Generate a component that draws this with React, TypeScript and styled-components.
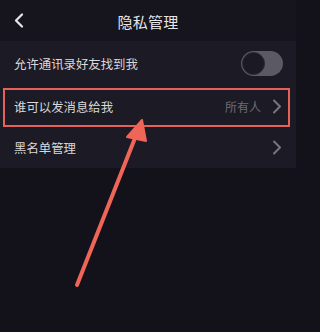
import React from "react";
import styled, { createGlobalStyle } from "styled-components";

const Global = createGlobalStyle`
  html, body { margin: 0; padding: 0; background: #13121a; }
  body { width: 296px; height: 332px; overflow: hidden; font-family: "Noto Sans CJK SC", "Noto Sans", sans-serif; }
`;

const Page = styled.div`
  position: relative;
  width: 296px;
  height: 332px;
  background: #13121a;
  display: flex;
  flex-direction: column;
`;

const Header = styled.div`
  height: 41px;
  background: #16151d;
  display: grid;
  grid-template-columns: 40px 1fr 40px;
  align-items: center;
`;

const BackBtn = styled.div`
  display: flex;
  align-items: center;
  justify-content: center;
  padding-right: 2px;
`;

const Title = styled.div`
  text-align: center;
  color: #e6e6ea;
  font-size: 15px;
  letter-spacing: 0.3px;
  padding-top: 2px;
`;

const List = styled.div`
  background: #1c1b25;
  display: flex;
  flex-direction: column;
`;

const Row = styled.div<{ $h: number }>`
  height: ${(p) => p.$h}px;
  display: flex;
  align-items: center;
  justify-content: space-between;
  padding: 0 14px 0 14px;
`;

const Label = styled.span`
  color: #d8d8dc;
  font-size: 12.4px;
`;

const Right = styled.div`
  display: flex;
  align-items: center;
  gap: 11px;
`;

const Value = styled.span`
  color: #6c6b74;
  font-size: 12px;
`;

const Toggle = styled.div`
  width: 42px;
  height: 25px;
  border-radius: 13px;
  background: #5b5a63;
  position: relative;
  margin-right: -1px;
`;

const Knob = styled.div`
  position: absolute;
  left: 1px;
  top: 1px;
  width: 21px;
  height: 21px;
  border-radius: 50%;
  background: #1b1a22;
  border: 1px solid #2a2932;
`;

const Highlight = styled.div`
  position: absolute;
  left: 3px;
  top: 88px;
  width: 283px;
  height: 35px;
  border: 2px solid #e4625a;
  pointer-events: none;
`;

const Overlay = styled.svg`
  position: absolute;
  left: 0;
  top: 0;
  pointer-events: none;
`;

const Chevron = () => (
  <svg width="10" height="15" viewBox="0 0 10 15">
    <path d="M2 1.5 L8 7.5 L2 13.5" fill="none" stroke="#77767e" strokeWidth="2" strokeLinecap="round" strokeLinejoin="round" />
  </svg>
);

export default function App() {
  return (
    <>
      <Global />
      <Page>
        <Header>
          <BackBtn>
            <svg width="10" height="15" viewBox="0 0 10 15">
              <path d="M8 1.5 L2 7.5 L8 13.5" fill="none" stroke="#e6e6ea" strokeWidth="2.2" strokeLinecap="round" strokeLinejoin="round" />
            </svg>
          </BackBtn>
          <Title>隐私管理</Title>
          <div />
        </Header>
        <List>
          <Row $h={45}>
            <Label>允许通讯录好友找到我</Label>
            <Toggle>
              <Knob />
            </Toggle>
          </Row>
          <Row $h={41}>
            <Label>谁可以发消息给我</Label>
            <Right>
              <Value>所有人</Value>
              <Chevron />
            </Right>
          </Row>
          <Row $h={41}>
            <Label>黑名单管理</Label>
            <Right>
              <Chevron />
            </Right>
          </Row>
        </List>
        <Highlight />
        <Overlay width="296" height="332" viewBox="0 0 296 332">
          <line x1="77" y1="285" x2="137" y2="133" stroke="#ef6658" strokeWidth="4" strokeLinecap="round" />
          <polygon points="142,120 127,137 146,141" fill="#ef6658" stroke="#ef6658" strokeWidth="2" strokeLinejoin="round" />
        </Overlay>
      </Page>
    </>
  );
}
